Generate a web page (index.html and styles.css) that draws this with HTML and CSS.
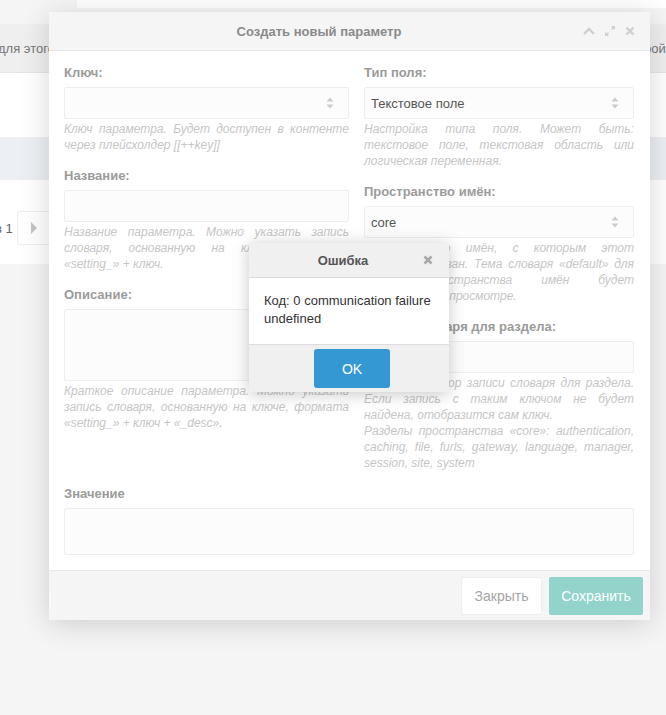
FILE: index.html
```html
<!DOCTYPE html>
<html lang="ru">
<head>
<meta charset="UTF-8">
<meta name="viewport" content="width=device-width, initial-scale=1.0">
<title>Создать новый параметр</title>
<link rel="stylesheet" href="styles.css">
</head>
<body>

<div class="page">
    <div class="topbar"></div>
    <div class="grid-panel">
        <div class="grid-head">
            <span class="head-left">для этого контекста</span>
            <span class="head-right">Настройки</span>
        </div>
        <div class="grid-row"></div>
        <div class="grid-row selected"></div>
        <div class="pager">
            <span class="pager-text">в 1</span>
            <div class="pager-btn"><span class="tri"></span></div>
        </div>
    </div>
</div>

<div class="modal">
    <div class="modal-head">
        <div class="modal-title">Создать новый параметр</div>
        <div class="modal-tools">
            <svg width="12" height="8" viewBox="0 0 12 8"><path d="M1 7L6 2L11 7" stroke="#cfcfcf" stroke-width="2.4" fill="none"/></svg>
            <svg width="12" height="12" viewBox="0 0 12 12"><path d="M7.5 4.5L10 2M4.5 7.5L2 10" stroke="#cfcfcf" stroke-width="1.5" fill="none"/><path d="M7 1H11V5Z M1 7V11H5Z" fill="#cfcfcf"/></svg>
            <svg width="10" height="10" viewBox="0 0 10 10"><path d="M1.5 1.5L8.5 8.5M8.5 1.5L1.5 8.5" stroke="#cfcfcf" stroke-width="2.4"/></svg>
        </div>
    </div>

    <div class="modal-body">
        <div class="form-grid">
            <div class="form-col">
                <div class="field">
                    <div class="label">Ключ:</div>
                    <div class="input"><span></span><svg class="spin" width="8" height="12" viewBox="0 0 8 12"><path d="M4 0.5L7.5 4.5H0.5Z M4 11.5L0.5 7.5H7.5Z" fill="#cbcbcb"/></svg></div>
                    <div class="help">Ключ параметра. Будет доступен в контенте через плейсхолдер [[++key]]</div>
                </div>
                <div class="field">
                    <div class="label">Название:</div>
                    <div class="input"></div>
                    <div class="help">Название параметра. Можно указать запись словаря, основанную на ключе, формата «setting_» + ключ.</div>
                </div>
                <div class="field">
                    <div class="label">Описание:</div>
                    <div class="input textarea"></div>
                    <div class="help">Краткое описание параметра. Можно указать запись словаря, основанную на ключе, формата «setting_» + ключ + «_desc».</div>
                </div>
            </div>
            <div class="form-col">
                <div class="field">
                    <div class="label">Тип поля:</div>
                    <div class="input"><span>Текстовое поле</span><svg class="spin" width="8" height="12" viewBox="0 0 8 12"><path d="M4 0.5L7.5 4.5H0.5Z M4 11.5L0.5 7.5H7.5Z" fill="#cbcbcb"/></svg></div>
                    <div class="help">Настройка типа поля. Может быть: текстовое поле, текстовая область или логическая переменная.</div>
                </div>
                <div class="field">
                    <div class="label">Пространство имён:</div>
                    <div class="input"><span>core</span><svg class="spin" width="8" height="12" viewBox="0 0 8 12"><path d="M4 0.5L7.5 4.5H0.5Z M4 11.5L0.5 7.5H7.5Z" fill="#cbcbcb"/></svg></div>
                    <div class="help">Пространство имён, с которым этот параметр связан. Тема словаря «default» для этого пространства имён будет загружена&nbsp;при просмотре.</div>
                </div>
                <div class="field">
                    <div class="label">Запись словаря для раздела:</div>
                    <div class="input"></div>
                    <div class="help">Идентификатор записи словаря для раздела. Если запись с таким ключом не будет найдена, отобразится сам ключ.<br>Разделы пространства «core»: authentication, caching, file, furls, gateway, language, manager, session, site, system</div>
                </div>
            </div>
        </div>
        <div class="field last">
            <div class="label">Значение</div>
            <div class="input value"></div>
        </div>
    </div>

    <div class="modal-foot">
        <button class="btn btn-close">Закрыть</button>
        <button class="btn btn-save">Сохранить</button>
    </div>
</div>

<div class="alert">
    <div class="alert-head">
        <div class="alert-title">Ошибка</div>
        <svg class="alert-x" width="10" height="10" viewBox="0 0 10 10"><path d="M1.5 1.5L8.5 8.5M8.5 1.5L1.5 8.5" stroke="#a8a8a8" stroke-width="2.6"/></svg>
    </div>
    <div class="alert-body">Код: 0 communication failure undefined</div>
    <div class="alert-foot">
        <button class="btn-ok">OK</button>
    </div>
</div>

</body>
</html>
```

FILE: styles.css
```css
body {
    margin: 0;
    background-color: #f5f5f5;
    font-family: "Liberation Sans", Arial, sans-serif;
    font-size: 13px;
    color: #555;
    overflow: hidden;
    height: 715px;
    position: relative;
}

/* page behind the window */
.page {
    width: 666px;
}
.topbar {
    height: 8px;
    margin-left: 77px;
    background-color: #fff;
}
.grid-panel {
    margin-top: 16px;
    background-color: #fff;
}
.grid-head {
    height: 48px;
    background-color: #efefef;
    border-bottom: 1px solid #e6e6e6;
    display: flex;
    align-items: center;
    white-space: nowrap;
    overflow: hidden;
    color: #777;
}
.head-left {
    flex: none;
    margin-left: -2px;
    width: 617px;
    overflow: hidden;
}
.head-right {
    flex: none;
}
.grid-row {
    height: 64px;
    border-bottom: 1px solid #eee;
}
.grid-row.selected {
    height: 40px;
    background-color: #eceff3;
}
.pager {
    height: 72px;
    padding-top: 12px;
    display: flex;
    align-items: center;
    border-top: 1px solid #eee;
}
.pager-text {
    margin-left: -5px;
    color: #666;
}
.pager-btn {
    margin-left: 4px;
    width: 32px;
    height: 32px;
    border: 1px solid #eee;
    border-radius: 2px;
    display: flex;
    align-items: center;
    justify-content: center;
}
.tri {
    width: 0;
    height: 0;
    border-left: 6px solid #c4c4c4;
    border-top: 6px solid transparent;
    border-bottom: 6px solid transparent;
}

/* main window */
.modal {
    position: absolute;
    left: 49px;
    top: 12px;
    width: 601px;
    background-color: #fff;
    box-shadow: 0 4px 28px rgba(0, 0, 0, 0.16);
}
.modal-head {
    height: 38px;
    background-color: #f5f5f5;
    border-bottom: 1px solid #e8e8e8;
    display: flex;
    align-items: center;
}
.modal-title {
    flex: 1;
    text-align: center;
    padding-left: 6px;
    font-weight: bold;
    color: #8a8a8a;
}
.modal-tools {
    display: flex;
    align-items: center;
    gap: 9px;
    padding-right: 15px;
}
.modal-body {
    padding: 14px 16px 15px 15px;
}
.form-grid {
    display: grid;
    grid-template-columns: 285px 270px;
    column-gap: 15px;
}
.field {
    margin-bottom: 15px;
}
.field.last {
    margin-bottom: 0;
}
.label {
    font-weight: bold;
    line-height: 16px;
    color: #9b9b9b;
    margin-bottom: 6px;
}
.input {
    height: 30px;
    border: 1px solid #eee;
    border-radius: 2px;
    background-color: #fcfcfc;
    padding: 0 14px 0 6px;
    color: #555;
    display: flex;
    align-items: center;
    justify-content: space-between;
}
.input.textarea {
    height: 70px;
}
.input.value {
    height: 45px;
}
.help {
    margin-top: 2px;
    font-size: 12px;
    font-style: italic;
    line-height: 16px;
    color: #c6c6c6;
    text-align: justify;
}

.modal-foot {
    border-top: 1px solid #e8e8e8;
    background-color: #f5f5f5;
    padding: 6px 7px 5px;
    display: flex;
    justify-content: flex-end;
    gap: 7px;
}
.btn {
    height: 38px;
    border: none;
    border-radius: 2px;
    font-family: "Liberation Sans", Arial, sans-serif;
    font-size: 14px;
    padding: 0 10px;
}
.btn-close {
    width: 81px;
    background-color: #fff;
    border: 1px solid #eee;
    color: #a5a5a5;
}
.btn-save {
    width: 94px;
    background-color: #92d3cb;
    color: #fff;
}

/* error box */
.alert {
    position: absolute;
    left: 249px;
    top: 243px;
    width: 200px;
    background-color: #fff;
    box-shadow: 0 2px 16px rgba(0, 0, 0, 0.22);
}
.alert-head {
    height: 34px;
    background-color: #f0f0f0;
    border-bottom: 1px solid #dcdcdc;
    display: flex;
    align-items: center;
}
.alert-title {
    flex: 1;
    text-align: center;
    padding-left: 14px;
    font-weight: bold;
    color: #555;
}
.alert-x {
    margin-right: 16px;
}
.alert-body {
    padding: 14px 15px 16px;
    line-height: 18px;
    color: #333;
}
.alert-foot {
    border-top: 1px solid #dcdcdc;
    background-color: #f0f0f0;
    padding: 4px 0;
    display: flex;
    justify-content: center;
}
.btn-ok {
    margin-left: 6px;
    width: 76px;
    height: 39px;
    border: none;
    border-radius: 3px;
    background-color: #3498d3;
    color: #fff;
    font-family: "Liberation Sans", Arial, sans-serif;
    font-size: 14px;
}
```
